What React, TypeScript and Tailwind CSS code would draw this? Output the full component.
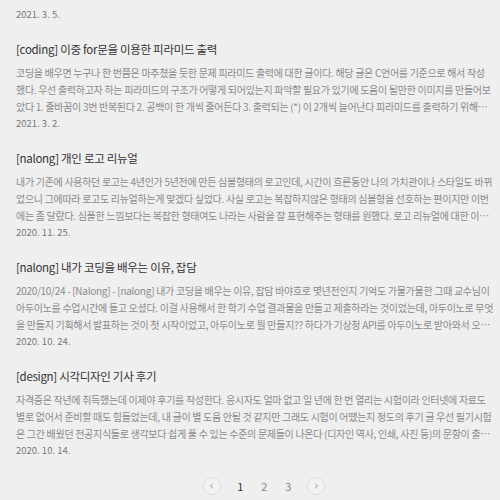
import React from "react";

interface Post {
    title: string;
    excerpt: string;
    date: string;
}

const posts: Post[] = [
    {
        title: "[coding] 이중 for문을 이용한 피라미드 출력",
        excerpt:
            "코딩을 배우면 누구나 한 번쯤은 마주쳤을 듯한 문제 피라미드 출력에 대한 글이다. 해당 글은 C언어를 기준으로 해서 작성했다. 우선 출력하고자 하는 피라미드의 구조가 어떻게 되어있는지 파악할 필요가 있기에 도움이 될만한 이미지를 만들어보았다 1. 줄바꿈이 3번 반복된다 2. 공백이 한 개씩 줄어든다 3. 출력되는 (*) 이 2개씩 늘어난다 피라미드를 출력하기 위해서 반복문을 사용한다",
        date: "2021. 3. 2.",
    },
    {
        title: "[nalong] 개인 로고 리뉴얼",
        excerpt:
            "내가 기존에 사용하던 로고는 4년인가 5년전에 만든 심볼형태의 로고인데, 시간이 흐른동안 나의 가치관이나 스타일도 바뀌었으니 그에따라 로고도 리뉴얼하는게 맞겠다 싶었다. 사실 로고는 복잡하지않은 형태의 심볼형을 선호하는 편이지만 이번에는 좀 달랐다. 심플한 느낌보다는 복잡한 형태여도 나라는 사람을 잘 표현해주는 형태를 원했다. 로고 리뉴얼에 대한 이야기를 해보려고 한다",
        date: "2020. 11. 25.",
    },
    {
        title: "[nalong] 내가 코딩을 배우는 이유, 잡담",
        excerpt:
            "2020/10/24 - [Nalong] - [nalong] 내가 코딩을 배우는 이유, 잡담 바야흐로 몇년전인지 기억도 가물가물한 그때 교수님이 아두이노를 수업시간에 들고 오셨다. 이걸 사용해서 한 학기 수업 결과물을 만들고 제출하라는 것이었는데, 아두이노로 무엇을 만들지 기획해서 발표하는 것이 첫 시작이었고, 아두이노로 뭘 만들지?? 하다가 기상청 API를 아두이노로 받아와서 오늘의 날씨를 보여주기로 했다",
        date: "2020. 10. 24.",
    },
    {
        title: "[design] 시각디자인 기사 후기",
        excerpt:
            "자격증은 작년에 취득했는데 이제야 후기를 작성한다. 응시자도 얼마 없고 일 년에 한 번 열리는 시험이라 인터넷에 자료도 별로 없어서 준비할 때도 힘들었는데, 내 글이 별 도움 안될 것 같지만 그래도 시험이 어땠는지 정도의 후기 글 우선 필기시험은 그간 배웠던 전공지식들로 생각보다 쉽게 풀 수 있는 수준의 문제들이 나온다 (디자인 역사, 인쇄, 사진 등)의 문항이 출제된다",
        date: "2020. 10. 14.",
    },
];

const font = { fontFamily: '"Noto Sans CJK KR", "Noto Sans", sans-serif' };

export default function App() {
    return (
        <div className="min-h-[500px] w-[500px] bg-[#efefef] pl-4 pr-[6.5px] pt-[7px]" style={font}>
            {/* tail of the previous post */}
            <div className="text-[9.5px] leading-[14px] text-[#777]">2021. 3. 5.</div>

            {posts.map((post) => (
                <article key={post.title} className="mt-[19px]">
                    <h2 className="text-[11.5px] leading-[18px] tracking-[-0.3px] text-[#333]">{post.title}</h2>
                    <p className="mt-[6px] line-clamp-3 text-[10px] leading-[17px] tracking-[-0.3px] text-[#8a8a8a]">
                        {post.excerpt}
                    </p>
                    <div className="mt-px text-[9.5px] leading-[14px] text-[#777]">{post.date}</div>
                </article>
            ))}

            <nav className="mt-5 flex items-center justify-center pl-[19px]">
                <button className="flex h-[18px] w-[18px] items-center justify-center rounded-full border border-[#dcdcdc] bg-[#f2f2f2] text-[#999]">
                    <svg width="8" height="8" viewBox="0 0 8 8" fill="none" stroke="currentColor" strokeWidth="1">
                        <path d="M5 1.5 2.5 4 5 6.5" />
                    </svg>
                </button>
                <div className="mx-[7px] flex items-center text-[11px] text-[#888]">
                    <span className="w-6 text-center text-[#333]">1</span>
                    <span className="w-6 text-center">2</span>
                    <span className="w-6 text-center">3</span>
                </div>
                <button className="flex h-[18px] w-[18px] items-center justify-center rounded-full border border-[#dcdcdc] bg-[#f2f2f2] text-[#999]">
                    <svg width="8" height="8" viewBox="0 0 8 8" fill="none" stroke="currentColor" strokeWidth="1">
                        <path d="M3 1.5 5.5 4 3 6.5" />
                    </svg>
                </button>
            </nav>
        </div>
    );
}
